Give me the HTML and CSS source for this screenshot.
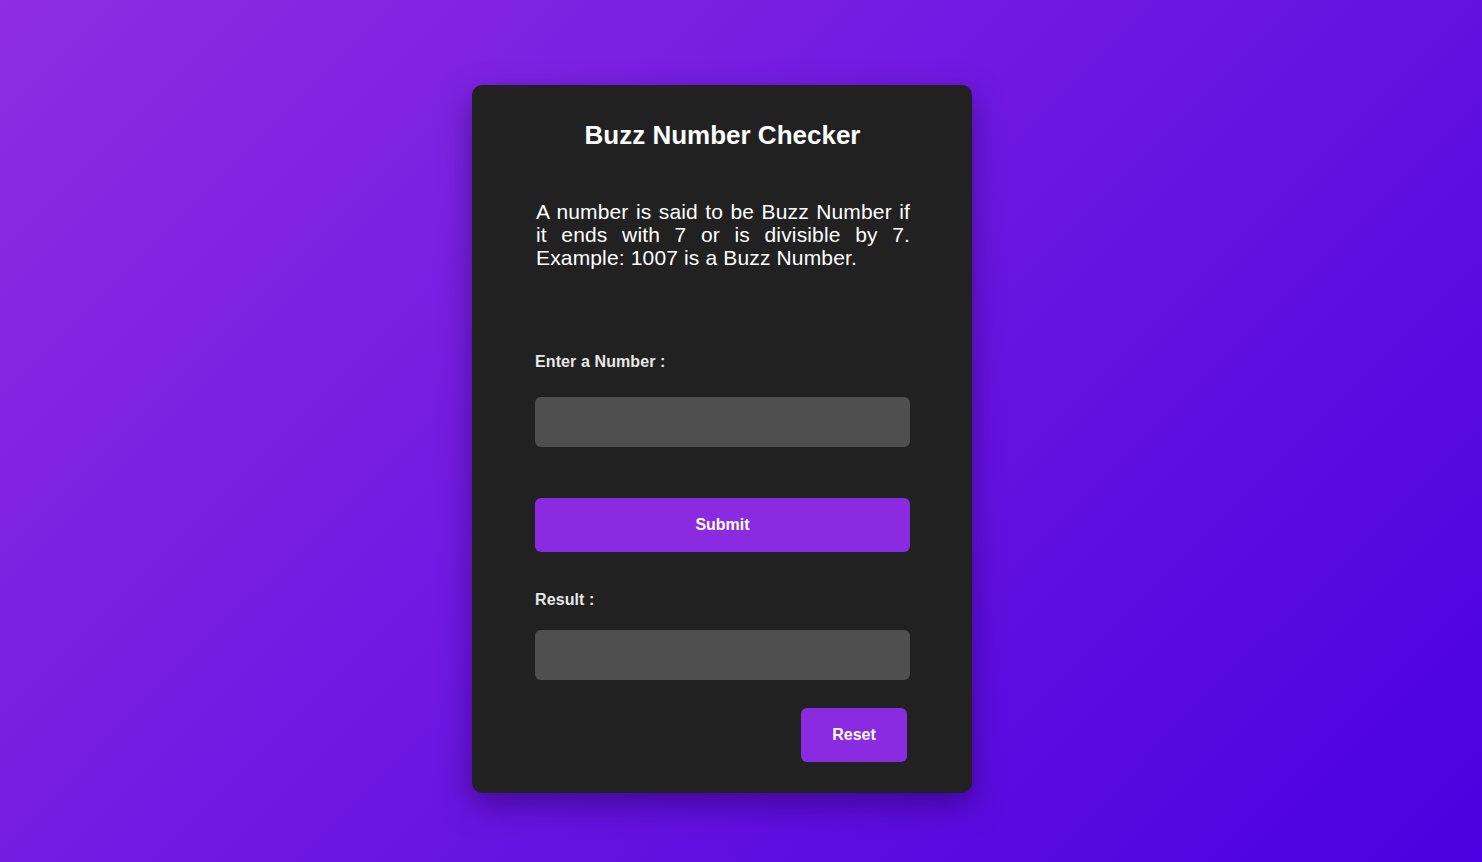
FILE: index.html
```html
<!DOCTYPE html>
<html lang="en">
<head>
<meta charset="utf-8">
<title>Buzz Number Checker</title>
<link rel="stylesheet" href="styles.css">
</head>
<body>
  <main class="card">
    <h1 class="title">Buzz Number Checker</h1>
    <p class="desc">A number is said to be Buzz Number if it ends with 7 or is divisible by 7. Example: 1007 is a Buzz Number.</p>
    <label class="label label-number" for="num">Enter a Number :</label>
    <input class="field field-number" id="num" type="text">
    <button class="btn btn-submit" type="button">Submit</button>
    <label class="label label-result" for="res">Result :</label>
    <input class="field field-result" id="res" type="text" readonly>
    <div class="actions">
      <button class="btn btn-reset" type="button">Reset</button>
    </div>
  </main>
</body>
</html>
```
FILE: styles.css
```css
* { box-sizing: border-box; }
html, body { height: 100%; }
body {
  margin: 0;
  padding-right: 38px;
  font-family: "Liberation Sans", Arial, sans-serif;
  background: linear-gradient(135deg, #8e2de2 0%, #4a00e0 100%);
  display: flex;
  justify-content: center;
  align-items: flex-start;
}
.card {
  margin-top: 85px;
  width: 500px;
  height: 708px;
  background: #212121;
  border-radius: 10px;
  box-shadow: 0 12px 30px rgba(40, 0, 90, 0.55);
  padding: 0 62px 0 63px;
  display: flex;
  flex-direction: column;
  color: #fff;
}
.title {
  margin: 35px 0 0;
  font-size: 26px;
  font-weight: bold;
  text-align: center;
  line-height: 30px;
}
.desc {
  margin: 50px 0 0 1px;
  font-size: 21px;
  line-height: 23px;
  letter-spacing: 0.15px;
  text-align: justify;
}
.label {
  font-size: 16px;
  font-weight: bold;
  line-height: 18px;
  letter-spacing: 0.1px;
  color: #e8e8e8;
}
.label-number { margin-top: 84px; }
.label-result { margin-top: 39px; }
.field {
  display: block;
  width: 100%;
  height: 50px;
  border: none;
  border-radius: 6px;
  background: #4f4f4f;
  color: #fff;
  font-family: inherit;
  font-size: 16px;
  padding: 0 12px;
  outline: none;
}
.field-number { margin-top: 26px; }
.field-result { margin-top: 21px; }
.btn {
  border: none;
  border-radius: 6px;
  background: #8a2be2;
  color: #fff;
  font-family: inherit;
  font-size: 16px;
  font-weight: bold;
  height: 54px;
  cursor: pointer;
}
.btn-submit {
  width: 100%;
  margin-top: 51px;
}
.actions {
  display: flex;
  justify-content: flex-end;
  margin-top: 28px;
  padding-right: 3px;
}
.btn-reset { width: 106px; }
```
